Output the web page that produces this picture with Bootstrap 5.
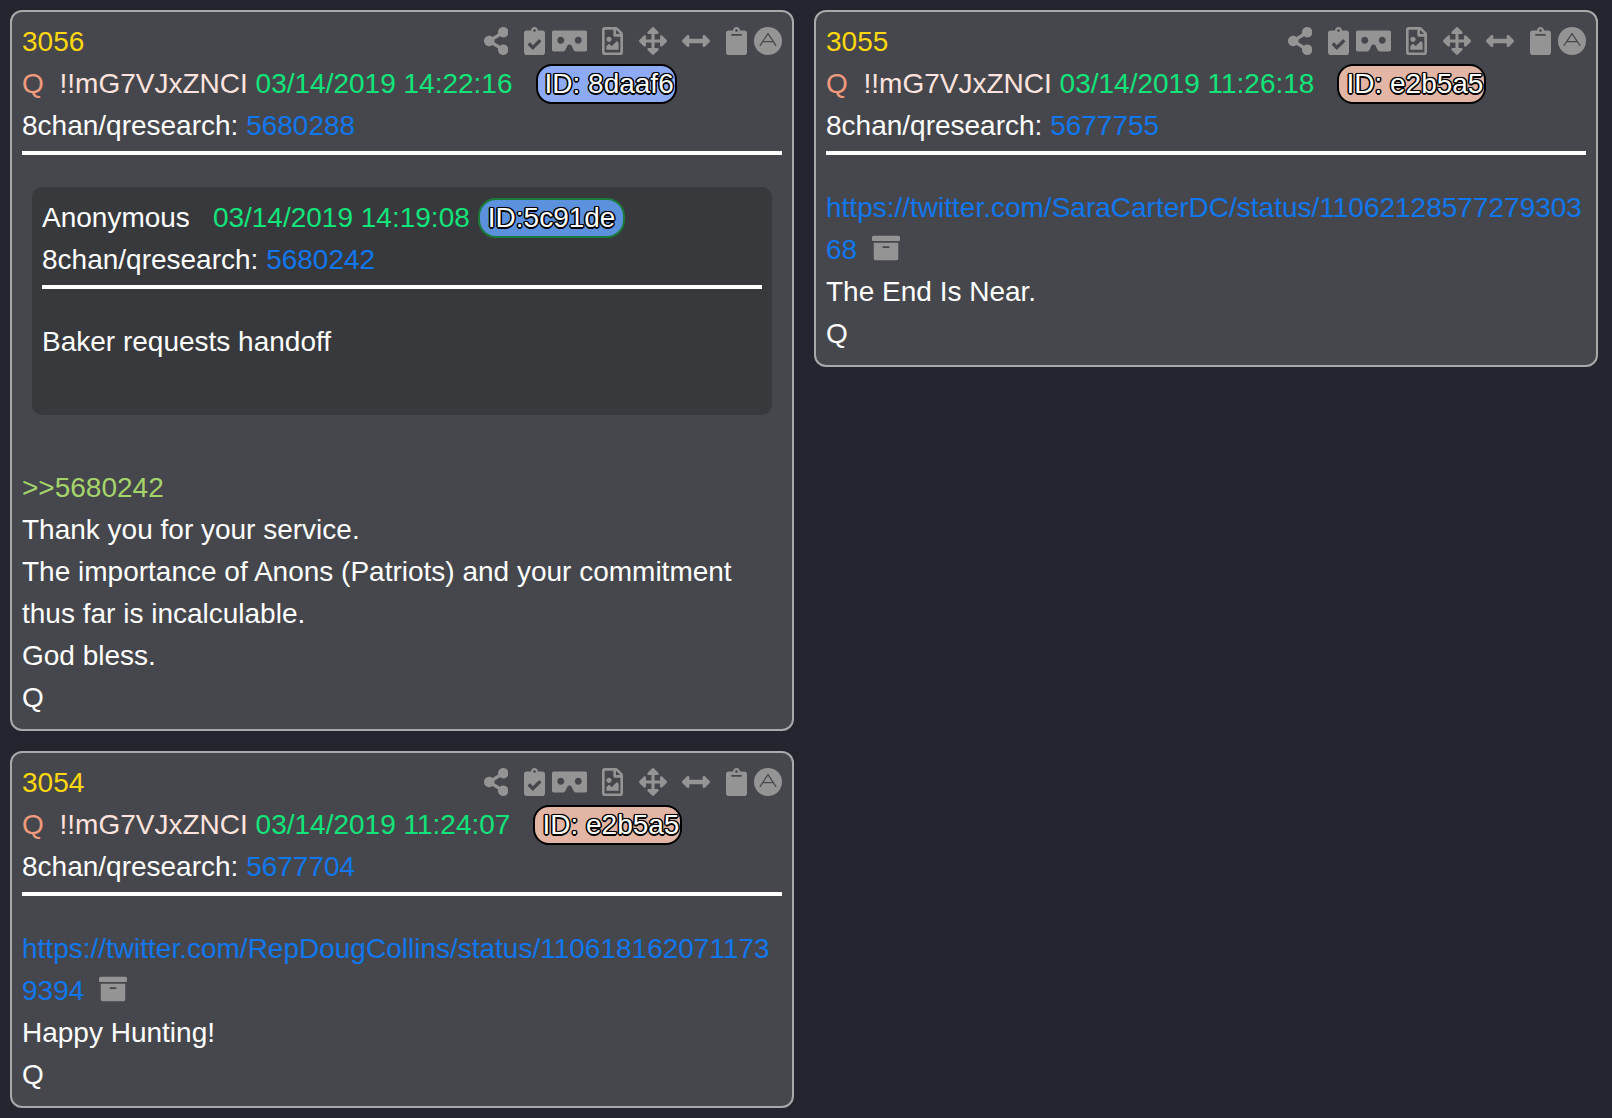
<!DOCTYPE html>
<html lang="en">
<head>
<meta charset="utf-8">
<title>Posts</title>
<link href="https://cdn.jsdelivr.net/npm/bootstrap@5.3.0/dist/css/bootstrap.min.css" rel="stylesheet">
<style>
html,body{height:100%}
body{background:#23262f;color:#fff;font-family:"Liberation Sans",Arial,sans-serif;font-size:28px;line-height:42px;padding:10px 14px 0 10px;overflow:hidden}
.post-grid{gap:20px}
.post-col{width:784px;flex:none;gap:20px}
.post{background:#46474c;border:2px solid #a9a9ab;border-radius:12px;padding:9px 10px 10px;color:#fff}
.post-num{color:#fdd80f}
.q-name{color:#f09a7c;margin-right:8px}
.trip{color:#ffe3df}
.stamp{color:#12e47a}
a.plink{color:#1177ee;text-decoration:none}
.plink-wrap{word-break:break-all}
.rule{border:0;border-top:4px solid #fff;opacity:1;margin:4px 0 32px}
.uid{display:inline-block;height:40px;line-height:36px;border:2px solid #000;border-radius:16px;padding:0 1px 0 7px;margin-left:23px;vertical-align:top;margin-top:1px;text-shadow:-1px -1px 0 #000,1px -1px 0 #000,-1px 1px 0 #000,1px 1px 0 #000,-1.5px 0 0 #000,1.5px 0 0 #000,0 -1.5px 0 #000,0 1.5px 0 #000,0 0 2px #000}
.uid-blue{background:#8daaf6}
.uid-rose{background:#e2b5a5}
.uid-reply{background:#5c91de;border-color:#1a7a3a;border-radius:18px;margin-left:8px;padding:0 8px 0 8px}
.reply{background:#38393d;border-radius:10px;margin:0 10px 52px;padding:10px 10px 52px}
.greentext{color:#a5d56a}
.tools{gap:15.6px;color:#949494;margin-top:-2px}
.tools-pair{gap:7px}
.tools svg,.arch{height:28px;display:block;fill:currentColor}
.arch{display:inline-block;width:28px;margin-left:15px;color:#949494;vertical-align:-3px}
.anon{margin-right:23px}
</style>
</head>
<body>
<svg width="0" height="0" class="position-absolute">
<defs>
<symbol id="i-share" viewBox="0 0 448 512"><path d="M352 320c-22.608 0-43.387 7.819-59.79 20.895l-102.486-64.054a96.551 96.551 0 0 0 0-41.683l102.486-64.054C308.613 184.181 329.392 192 352 192c53.019 0 96-42.981 96-96S405.019 0 352 0s-96 42.981-96 96c0 7.158.79 14.13 2.276 20.841L155.79 180.895C139.387 167.819 118.608 160 96 160c-53.019 0-96 42.981-96 96s42.981 96 96 96c22.608 0 43.387-7.819 59.79-20.895l102.486 64.054A96.301 96.301 0 0 0 256 416c0 53.019 42.981 96 96 96s96-42.981 96-96-42.981-96-96-96z"/></symbol>
<symbol id="i-check" viewBox="0 0 384 512"><path d="M336 64h-80c0-35.3-28.7-64-64-64s-64 28.7-64 64H48C21.5 64 0 85.5 0 112v352c0 26.5 21.5 48 48 48h288c26.5 0 48-21.5 48-48V112c0-26.5-21.5-48-48-48zM192 40c13.3 0 24 10.7 24 24s-10.7 24-24 24-24-10.7-24-24 10.7-24 24-24zm121.2 231.8l-143 141.8c-4.7 4.7-12.3 4.6-17-.1l-82.6-83.3c-4.7-4.7-4.6-12.3.1-17L99.1 285c4.7-4.7 12.3-4.6 17 .1l46 46.4 106-105.2c4.7-4.7 12.3-4.6 17 .1l28.2 28.4c4.7 4.8 4.6 12.3-.1 17z"/></symbol>
<symbol id="i-vr" viewBox="0 0 640 512"><path d="M608 64H32C14.33 64 0 78.33 0 96v320c0 17.67 14.33 32 32 32h160.22c25.19 0 48.03-14.77 58.36-37.74l27.74-61.64C286.21 331.08 302.35 320 320 320s33.79 11.08 41.68 28.62l27.74 61.64C399.75 433.23 422.6 448 447.78 448H608c17.67 0 32-14.33 32-32V96c0-17.67-14.33-32-32-32zM160 304c-35.35 0-64-28.65-64-64s28.65-64 64-64 64 28.65 64 64-28.65 64-64 64zm320 0c-35.35 0-64-28.65-64-64s28.65-64 64-64 64 28.65 64 64-28.65 64-64 64z"/></symbol>
<symbol id="i-file" viewBox="0 0 384 512"><path d="M369.9 97.9L286 14C277 5 264.8-.1 252.1-.1H48C21.5 0 0 21.5 0 48v416c0 26.5 21.5 48 48 48h288c26.5 0 48-21.5 48-48V131.9c0-12.7-5.1-25-14.1-34zM332.1 128H256V51.9l76.1 76.1zM48 464V48h160v104c0 13.3 10.7 24 24 24h104v288H48zm32-48h224V288l-23.5-23.5c-4.7-4.7-12.3-4.7-17 0L176 352l-39.5-39.5c-4.7-4.7-12.3-4.7-17 0L80 352v64zm48-240c-26.5 0-48 21.5-48 48s21.5 48 48 48 48-21.5 48-48-21.5-48-48-48z"/></symbol>
<symbol id="i-move" viewBox="0 0 512 512"><path d="M352.201 425.775l-79.196 79.196c-9.373 9.373-24.568 9.373-33.941 0l-79.196-79.196c-15.119-15.119-4.411-40.971 16.971-40.97h51.162L228 284H127.196v51.162c0 21.382-25.851 32.09-40.971 16.971L7.029 272.937c-9.373-9.373-9.373-24.569 0-33.941L86.225 159.8c15.119-15.119 40.971-4.411 40.971 16.971V228H228V127.196h-51.23c-21.382 0-32.09-25.851-16.971-40.971l79.196-79.196c9.373-9.373 24.568-9.373 33.941 0l79.196 79.196c15.119 15.119 4.411 40.971-16.971 40.971h-51.162V228h100.804v-51.162c0-21.382 25.851-32.09 40.97-16.971l79.196 79.196c9.373 9.373 9.373 24.569 0 33.941L425.773 352.2c-15.119 15.119-40.971 4.411-40.97-16.971V284H284v100.804h51.23c21.382 0 32.09 25.851 16.971 40.971z"/></symbol>
<symbol id="i-h" viewBox="0 0 512 512"><path d="M377.941 169.941V216H134.059v-46.059c0-21.382-25.851-32.09-40.971-16.971L7.029 239.029c-9.373 9.373-9.373 24.568 0 33.941l86.059 86.059c15.119 15.119 40.971 4.411 40.971-16.971V296h243.882v46.059c0 21.382 25.851 32.09 40.971 16.971l86.059-86.059c9.373-9.373 9.373-24.568 0-33.941l-86.059-86.059c-15.119-15.12-40.971-4.412-40.971 16.97z"/></symbol>
<symbol id="i-clip" viewBox="0 0 384 512"><path d="M384 112v352c0 26.51-21.49 48-48 48H48c-26.51 0-48-21.49-48-48V112c0-26.51 21.49-48 48-48h80c0-35.29 28.71-64 64-64s64 28.71 64 64h80c26.51 0 48 21.49 48 48zM192 40c-13.255 0-24 10.745-24 24s10.745 24 24 24 24-10.745 24-24-10.745-24-24-24m96 114v-20a6 6 0 0 0-6-6H102a6 6 0 0 0-6 6v20a6 6 0 0 0 6 6h180a6 6 0 0 0 6-6z"/></symbol>
<symbol id="i-top" viewBox="0 0 28 28"><circle cx="14" cy="14" r="14"/><path d="M5.8 18.8L14 6.6l8.2 12.2M8.6 14.6h10.8" fill="none" stroke="#46474c" stroke-width="1.2"/></symbol>
<symbol id="i-arch" viewBox="0 0 512 512"><path d="M32 448c0 17.7 14.3 32 32 32h384c17.7 0 32-14.3 32-32V160H32v288zm160-212c0-6.6 5.4-12 12-12h104c6.6 0 12 5.4 12 12v8c0 6.6-5.4 12-12 12H204c-6.6 0-12-5.4-12-12v-8zM480 32H32C14.3 32 0 46.3 0 64v48c0 8.8 7.2 16 16 16h480c8.8 0 16-7.2 16-16V64c0-17.7-14.3-32-32-32z"/></symbol>
</defs>
</svg>

<div class="d-flex post-grid">
  <div class="d-flex flex-column post-col">
    <article class="post">
      <div class="d-flex justify-content-between align-items-center">
        <span class="post-num">3056</span>
        <div class="d-flex align-items-center tools">
          <svg width="24.5" viewBox="0 0 448 512"><use href="#i-share"/></svg>
          <div class="d-flex align-items-center tools-pair"><svg width="21" viewBox="0 0 384 512"><use href="#i-check"/></svg><svg width="35" viewBox="0 0 640 512"><use href="#i-vr"/></svg></div>
          <svg width="21" viewBox="0 0 384 512"><use href="#i-file"/></svg>
          <svg width="28" viewBox="0 0 512 512"><use href="#i-move"/></svg>
          <svg width="28" viewBox="0 0 512 512"><use href="#i-h"/></svg>
          <div class="d-flex align-items-center tools-pair"><svg width="21" viewBox="0 0 384 512"><use href="#i-clip"/></svg><svg width="28" viewBox="0 0 28 28"><use href="#i-top"/></svg></div>
        </div>
      </div>
      <div><span class="q-name">Q</span> <span class="trip">!!mG7VJxZNCI</span> <span class="stamp">03/14/2019 14:22:16</span><span class="uid uid-blue">ID: 8daaf6</span></div>
      <div>8chan/qresearch: <a class="plink" href="#">5680288</a></div>
      <hr class="rule">
      <div class="reply">
        <div><span class="anon">Anonymous</span><span class="stamp">03/14/2019 14:19:08</span><span class="uid uid-reply">ID:5c91de</span></div>
        <div>8chan/qresearch: <a class="plink" href="#">5680242</a></div>
        <hr class="rule">
        <div>Baker requests handoff</div>
      </div>
      <div class="greentext">&gt;&gt;5680242</div>
      <div>Thank you for your service.</div>
      <div>The importance of Anons (Patriots) and your commitment thus far is incalculable.</div>
      <div>God bless.</div>
      <div>Q</div>
    </article>

    <article class="post">
      <div class="d-flex justify-content-between align-items-center">
        <span class="post-num">3054</span>
        <div class="d-flex align-items-center tools">
          <svg width="24.5" viewBox="0 0 448 512"><use href="#i-share"/></svg>
          <div class="d-flex align-items-center tools-pair"><svg width="21" viewBox="0 0 384 512"><use href="#i-check"/></svg><svg width="35" viewBox="0 0 640 512"><use href="#i-vr"/></svg></div>
          <svg width="21" viewBox="0 0 384 512"><use href="#i-file"/></svg>
          <svg width="28" viewBox="0 0 512 512"><use href="#i-move"/></svg>
          <svg width="28" viewBox="0 0 512 512"><use href="#i-h"/></svg>
          <div class="d-flex align-items-center tools-pair"><svg width="21" viewBox="0 0 384 512"><use href="#i-clip"/></svg><svg width="28" viewBox="0 0 28 28"><use href="#i-top"/></svg></div>
        </div>
      </div>
      <div><span class="q-name">Q</span> <span class="trip">!!mG7VJxZNCI</span> <span class="stamp">03/14/2019 11:24:07</span><span class="uid uid-rose">ID: e2b5a5</span></div>
      <div>8chan/qresearch: <a class="plink" href="#">5677704</a></div>
      <hr class="rule">
      <div class="plink-wrap"><a class="plink" href="#">https://twitter.com/RepDougCollins/status/1106181620711739394</a><svg class="arch" viewBox="0 0 512 512"><use href="#i-arch"/></svg></div>
      <div>Happy Hunting!</div>
      <div>Q</div>
    </article>
  </div>

  <div class="d-flex flex-column post-col">
    <article class="post">
      <div class="d-flex justify-content-between align-items-center">
        <span class="post-num">3055</span>
        <div class="d-flex align-items-center tools">
          <svg width="24.5" viewBox="0 0 448 512"><use href="#i-share"/></svg>
          <div class="d-flex align-items-center tools-pair"><svg width="21" viewBox="0 0 384 512"><use href="#i-check"/></svg><svg width="35" viewBox="0 0 640 512"><use href="#i-vr"/></svg></div>
          <svg width="21" viewBox="0 0 384 512"><use href="#i-file"/></svg>
          <svg width="28" viewBox="0 0 512 512"><use href="#i-move"/></svg>
          <svg width="28" viewBox="0 0 512 512"><use href="#i-h"/></svg>
          <div class="d-flex align-items-center tools-pair"><svg width="21" viewBox="0 0 384 512"><use href="#i-clip"/></svg><svg width="28" viewBox="0 0 28 28"><use href="#i-top"/></svg></div>
        </div>
      </div>
      <div><span class="q-name">Q</span> <span class="trip">!!mG7VJxZNCI</span> <span class="stamp">03/14/2019 11:26:18</span><span class="uid uid-rose">ID: e2b5a5</span></div>
      <div>8chan/qresearch: <a class="plink" href="#">5677755</a></div>
      <hr class="rule">
      <div class="plink-wrap"><a class="plink" href="#">https://twitter.com/SaraCarterDC/status/1106212857727930368</a><svg class="arch" viewBox="0 0 512 512"><use href="#i-arch"/></svg></div>
      <div>The End Is Near.</div>
      <div>Q</div>
    </article>
  </div>
</div>
</body>
</html>
